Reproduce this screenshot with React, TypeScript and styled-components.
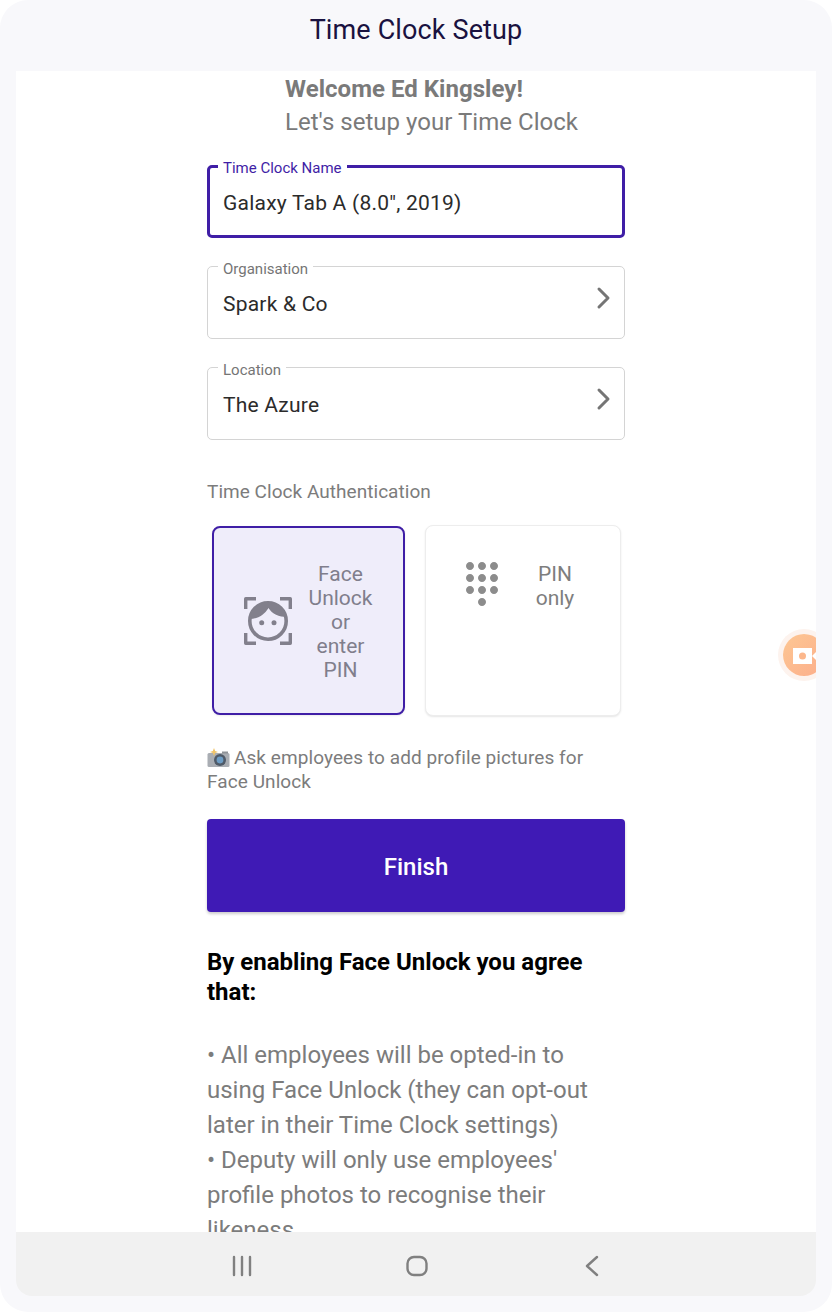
import React from 'react';
import styled, { createGlobalStyle } from 'styled-components';
import { MdDialpad } from 'react-icons/md';

const GlobalStyle = createGlobalStyle`
  html, body {
    margin: 0;
    padding: 0;
    background: #ffffff;
  }
  * {
    box-sizing: border-box;
  }
`;

const Frame = styled.div`
  width: 832px;
  height: 1312px;
  display: flex;
  flex-direction: column;
  padding: 0 16px 16px;
  background: #f8f8fb;
  border-radius: 28px;
  font-family: Roboto, 'Liberation Sans', sans-serif;
  overflow: hidden;
`;

const Header = styled.header`
  height: 71px;
  flex: none;
  display: flex;
  align-items: flex-start;
  justify-content: center;
  padding-top: 13px;
  font-size: 27px;
  line-height: 34px;
  letter-spacing: 0.13px;
  color: #1a1240;
`;

const Screen = styled.main`
  position: relative;
  flex: 1;
  min-height: 0;
  overflow: hidden;
  background: #ffffff;
`;

const Content = styled.div`
  width: 418px;
  margin: 0 auto;
  display: flex;
  flex-direction: column;
`;

const Welcome = styled.div`
  margin-left: 78px;
  font-size: 24px;
  line-height: 33px;
  letter-spacing: 0.03px;
  color: #7a7a7a;
  padding-top: 2px;
`;

const WelcomeName = styled.div`
  font-weight: 700;
`;

const Field = styled.div<{ $focused?: boolean }>`
  position: relative;
  height: 73px;
  margin-top: ${({ $focused }) => ($focused ? '26px' : '28px')};
  padding: ${({ $focused }) => ($focused ? '21px 13px 0' : '23px 15px 0')};
  border: ${({ $focused }) => ($focused ? '3px solid #3f1ea6' : '1px solid #d4d4d4')};
  border-radius: 5px;
  font-size: 21px;
  line-height: 28px;
  letter-spacing: 0.22px;
  color: #2b2b2b;
`;

const FieldLabel = styled.label<{ $focused?: boolean }>`
  position: absolute;
  top: ${({ $focused }) => ($focused ? '-10px' : '-8px')};
  left: ${({ $focused }) => ($focused ? '8px' : '10px')};
  padding: 0 5px;
  background: #ffffff;
  font-size: 15px;
  line-height: 20px;
  letter-spacing: 0;
  color: ${({ $focused }) => ($focused ? '#3f1ea6' : '#757575')};
`;

const Chevron = styled.svg`
  position: absolute;
  top: 19px;
  right: 10px;
  width: 20px;
  height: 24px;
`;

const SectionLabel = styled.div`
  margin-top: 40px;
  font-size: 19px;
  line-height: 24px;
  letter-spacing: 0.04px;
  color: #7c7c7c;
`;

const Options = styled.div`
  display: grid;
  grid-template-columns: 193px 196px;
  column-gap: 20px;
  margin: 21px 4px 0 5px;
  align-items: center;
`;

const OptionCard = styled.div<{ $selected?: boolean }>`
  display: flex;
  align-items: ${({ $selected }) => ($selected ? 'center' : 'flex-start')};
  gap: 16px;
  height: ${({ $selected }) => ($selected ? '189px' : '191px')};
  padding: ${({ $selected }) => ($selected ? '0 30px' : '34px 32px')};
  border-radius: 8px;
  border: ${({ $selected }) => ($selected ? '2px solid #3f1ea6' : '1px solid #ededed')};
  background: ${({ $selected }) => ($selected ? '#efedfa' : '#ffffff')};
  box-shadow: 0 1px 2px rgba(0, 0, 0, ${({ $selected }) => ($selected ? 0.08 : 0.1)});
`;

const OptionIcon = styled.div`
  flex: none;
  width: 48px;
  height: 48px;
  color: #8c8c8c;
`;

const OptionText = styled.div<{ $selected?: boolean }>`
  flex: 1;
  padding-top: 2px;
  text-align: center;
  font-size: 21px;
  line-height: 24px;
  color: ${({ $selected }) => ($selected ? '#807e8c' : '#7e7e7e')};
`;

const Hint = styled.div`
  margin-top: 30px;
  font-size: 19px;
  line-height: 24px;
  letter-spacing: 0.08px;
  color: #7c7c7c;
`;

const HintIcon = styled.svg`
  display: inline-block;
  width: 23px;
  height: 20px;
  margin: -4px 4px -2px 0;
  vertical-align: -2px;
`;

const FinishButton = styled.button`
  height: 93px;
  margin-top: 25px;
  padding: 2px 0 0;
  border: none;
  border-radius: 4px;
  background: #3f1ab5;
  box-shadow: 0 2px 3px rgba(0, 0, 0, 0.2);
  color: #ffffff;
  font-family: inherit;
  font-size: 24px;
  font-weight: 500;
`;

const AgreeTitle = styled.h2`
  margin: 35px 0 0;
  font-size: 24px;
  line-height: 30px;
  font-weight: 700;
  color: #000000;
`;

const AgreeBody = styled.p`
  margin: 31px 0 0;
  font-size: 24px;
  line-height: 35px;
  color: #7c7c7c;
`;

const FloatingButton = styled.div`
  position: absolute;
  top: 563px;
  left: 767px;
  width: 42px;
  height: 42px;
  border-radius: 50%;
  background: linear-gradient(135deg, #fdc793, #fcae8b);
  box-shadow: 0 0 0 5px #fdf3ee;
`;

const FloatingCamera = styled.svg`
  position: absolute;
  top: 13px;
  left: 10px;
  width: 30px;
  height: 18px;
`;

const NavBar = styled.nav`
  height: 64px;
  flex: none;
  display: flex;
  justify-content: center;
  align-items: center;
  gap: 127px;
  padding: 4px 0 0 2px;
  background: #f1f1f1;
  border-radius: 0 0 16px 16px;
`;

const NavIcon = styled.svg`
  width: 48px;
  height: 24px;
  fill: none;
  stroke: #808080;
  stroke-width: 2.4;
  stroke-linecap: round;
  stroke-linejoin: round;
`;

const ChevronIcon = () => (
  <Chevron viewBox="0 0 20 24" fill="none" stroke="#757575" strokeWidth="3" strokeLinecap="round" strokeLinejoin="round">
    <path d="M5 3l9 9-9 9" />
  </Chevron>
);

const FaceIcon = () => (
  <svg viewBox="0 0 48 48" width="48" height="48">
    <g fill="none" stroke="#82808c" strokeLinejoin="round">
      <path strokeWidth="3.4" d="M1.7 12V1.7H12M36 1.7h10.3V12M46.3 36v10.3H36M12 46.3H1.7V36" />
      <circle strokeWidth="3.6" cx="24" cy="24" r="18.2" />
    </g>
    <path d="M5.5 22C14 22 20 18 24.5 11 28 17 35 20 43 20 41 11 33 5.5 24 5.5 14 5.5 7 12 5.5 22z" fill="#82808c" />
    <circle cx="17.7" cy="25.7" r="2.5" fill="#82808c" />
    <circle cx="30" cy="25.7" r="2.5" fill="#82808c" />
  </svg>
);

const CameraFlashIcon = () => (
  <HintIcon viewBox="0 0 23 20">
    <rect x="0.5" y="5" width="22" height="14" rx="1.5" fill="#a9adb3" />
    <rect x="15" y="3.5" width="6" height="2" fill="#8f9398" />
    <circle cx="13" cy="12" r="6" fill="#4f5a68" />
    <circle cx="13" cy="12" r="3.4" fill="#6c9cc4" />
    <path d="M7 0l1.2 3L11 4 8.2 5 7 8 5.8 5 3 4l2.8-1z" fill="#f1c56b" />
  </HintIcon>
);

export default function App() {
  return (
    <>
      <GlobalStyle />
      <Frame>
        <Header>Time Clock Setup</Header>
        <Screen>
          <Content>
            <Welcome>
              <WelcomeName>Welcome Ed Kingsley!</WelcomeName>
              Let's setup your Time Clock
            </Welcome>

            <Field $focused>
              <FieldLabel $focused>Time Clock Name</FieldLabel>
              Galaxy Tab A (8.0", 2019)
            </Field>
            <Field>
              <FieldLabel>Organisation</FieldLabel>
              Spark &amp; Co
              <ChevronIcon />
            </Field>
            <Field>
              <FieldLabel>Location</FieldLabel>
              The Azure
              <ChevronIcon />
            </Field>

            <SectionLabel>Time Clock Authentication</SectionLabel>
            <Options>
              <OptionCard $selected>
                <OptionIcon>
                  <FaceIcon />
                </OptionIcon>
                <OptionText $selected>Face Unlock or enter PIN</OptionText>
              </OptionCard>
              <OptionCard>
                <OptionIcon>
                  <MdDialpad size={48} />
                </OptionIcon>
                <OptionText>PIN only</OptionText>
              </OptionCard>
            </Options>

            <Hint>
              <CameraFlashIcon />
              Ask employees to add profile pictures for Face Unlock
            </Hint>

            <FinishButton>Finish</FinishButton>

            <AgreeTitle>By enabling Face Unlock you agree that:</AgreeTitle>
            <AgreeBody>
              • All employees will be opted-in to using Face Unlock (they can opt-out later in their Time Clock settings)
              <br />• Deputy will only use employees' profile photos to recognise their likeness
            </AgreeBody>
          </Content>

          <FloatingButton>
            <FloatingCamera viewBox="0 0 30 18">
              <path d="M0 1h19v16H0z" fill="#ffffff" />
              <path d="M19 9l5-5v10z" fill="#ffffff" />
              <circle cx="9.5" cy="9" r="3.5" fill="#fcb78c" />
            </FloatingCamera>
          </FloatingButton>
        </Screen>
        <NavBar>
          <NavIcon viewBox="0 0 48 24">
            <path d="M16 3v18M24 3v18M32 3v18" />
          </NavIcon>
          <NavIcon viewBox="0 0 48 24">
            <rect x="14.5" y="3" width="19" height="18" rx="6.5" />
          </NavIcon>
          <NavIcon viewBox="0 0 48 24">
            <path d="M29 3l-10 9 10 9" />
          </NavIcon>
        </NavBar>
      </Frame>
    </>
  );
}
